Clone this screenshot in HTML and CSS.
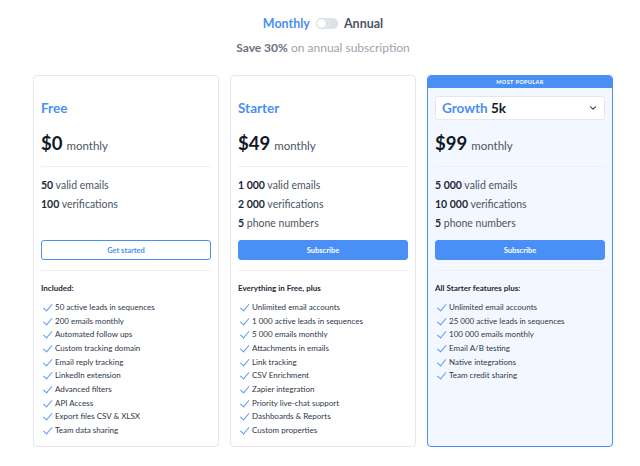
FILE: index.html
```html
<!DOCTYPE html>
<html lang="en">
  <head>
    <meta charset="UTF-8" />
    <meta name="viewport" content="width=device-width, initial-scale=1.0" />
    <title>Pricing</title>
    <link rel="stylesheet" href="styles.css">
  </head>
  <body>
    <div class="pricing">
      <div class="billing">
        <div class="billing-toggle">
          <span class="period active">Monthly</span>
          <span class="switch"><span class="knob"></span></span>
          <span class="period">Annual</span>
        </div>
        <p class="saving"><strong>Save 30%</strong> on annual subscription</p>
      </div>

      <div class="plans">
        <div class="plan">
          <div class="plan-title">Free</div>
          <div class="price"><span class="amount">$0</span> monthly</div>
          <div class="stats">
            <div><b>50</b> valid emails</div>
            <div><b>100</b> verifications</div>
          </div>
          <button class="btn btn-outline">Get started</button>
          <div class="features">
            <h4>Included:</h4>
            <ul>
              <li>50 active leads in sequences</li>
              <li>200 emails monthly</li>
              <li>Automated follow ups</li>
              <li>Custom tracking domain</li>
              <li>Email reply tracking</li>
              <li>LinkedIn extension</li>
              <li>Advanced filters</li>
              <li>API Access</li>
              <li>Export files CSV &amp; XLSX</li>
              <li>Team data sharing</li>
            </ul>
          </div>
        </div>

        <div class="plan">
          <div class="plan-title">Starter</div>
          <div class="price"><span class="amount">$49</span> monthly</div>
          <div class="stats">
            <div><b>1 000</b> valid emails</div>
            <div><b>2 000</b> verifications</div>
            <div><b>5</b> phone numbers</div>
          </div>
          <button class="btn btn-primary">Subscribe</button>
          <div class="features">
            <h4>Everything in Free, plus</h4>
            <ul>
              <li>Unlimited email accounts</li>
              <li>1 000 active leads in sequences</li>
              <li>5 000 emails monthly</li>
              <li>Attachments in emails</li>
              <li>Link tracking</li>
              <li>CSV Enrichment</li>
              <li>Zapier integration</li>
              <li>Priority live-chat support</li>
              <li>Dashboards &amp; Reports</li>
              <li>Custom properties</li>
            </ul>
          </div>
        </div>

        <div class="plan popular">
          <div class="badge">MOST POPULAR</div>
          <div class="plan-select">
            <span><span class="plan-name">Growth</span> 5k</span>
            <svg width="10" height="10" viewBox="0 0 10 10"><path d="M2.5 3.8 5 6.2 7.5 3.8" fill="none" stroke="#374151" stroke-width="1.1" stroke-linecap="round" stroke-linejoin="round"/></svg>
          </div>
          <div class="price"><span class="amount">$99</span> monthly</div>
          <div class="stats">
            <div><b>5 000</b> valid emails</div>
            <div><b>10 000</b> verifications</div>
            <div><b>5</b> phone numbers</div>
          </div>
          <button class="btn btn-primary">Subscribe</button>
          <div class="features">
            <h4>All Starter features plus:</h4>
            <ul>
              <li>Unlimited email accounts</li>
              <li>25 000 active leads in sequences</li>
              <li>100 000 emails monthly</li>
              <li>Email A/B testing</li>
              <li>Native integrations</li>
              <li>Team credit sharing</li>
            </ul>
          </div>
        </div>
      </div>
    </div>
  </body>
</html>
```

FILE: styles.css
```css
* {
  margin: 0;
  padding: 0;
  box-sizing: border-box;
}

body {
  font-family: 'Lato', 'Open Sans', sans-serif;
  background: #fff;
  color: #1f2937;
}

.pricing {
  padding: 13px 27px 0 33px;
}

.billing {
  display: flex;
  flex-direction: column;
  align-items: center;
}

.billing-toggle {
  display: flex;
  align-items: center;
  gap: 5px;
  font-size: 12.5px;
  font-weight: 700;
  color: #4b5563;
  height: 20px;
}

.period.active {
  color: #4a8ff5;
}

.switch {
  width: 22px;
  height: 11px;
  border-radius: 6px;
  background: linear-gradient(90deg, #eceef1, #d9dce1);
  position: relative;
  margin: 0 1px;
}

.knob {
  position: absolute;
  left: 0;
  top: 0;
  width: 11px;
  height: 11px;
  border-radius: 50%;
  background: #fff;
  border: 1px solid #d1d5db;
}

.saving {
  margin-top: 6px;
  font-size: 12px;
  color: #9ca3af;
  line-height: 18px;
}

.saving strong {
  color: #6b7280;
  font-weight: 700;
}

.plans {
  margin-top: 18px;
  display: grid;
  grid-template-columns: repeat(3, 186px);
  gap: 11px;
}

.plan {
  border: 1px solid #e5e7eb;
  border-radius: 4px;
  padding: 20px 7px 10px;
  box-shadow: 0 1px 2px rgba(0, 0, 0, 0.04);
  height: 372px;
}

.plan-title {
  height: 24px;
  display: flex;
  align-items: center;
  font-size: 13.5px;
  font-weight: 700;
  color: #4a8ff5;
}

.price {
  margin-top: 9px;
  display: flex;
  align-items: baseline;
  gap: 4px;
  font-size: 11.5px;
  color: #4b5563;
  padding-bottom: 8px;
  border-bottom: 1px solid #eef0f3;
  height: 38px;
  line-height: 28px;
}

.amount {
  font-size: 18.5px;
  font-weight: 700;
  color: #111827;
}

.stats {
  padding-top: 9px;
  height: 73px;
  font-size: 10.5px;
  line-height: 19px;
  color: #4b5563;
}

.stats b {
  color: #1f2937;
  font-weight: 700;
}

.btn {
  display: block;
  width: 100%;
  height: 20px;
  border-radius: 3px;
  font-family: inherit;
  font-size: 7.5px;
  font-weight: 700;
  cursor: pointer;
}

.btn-outline {
  background: #fff;
  border: 1px solid #4a8ff5;
  color: #4a8ff5;
}

.btn-primary {
  background: #4a8ff5;
  border: 1px solid #4a8ff5;
  color: #fff;
}

.features {
  margin-top: 10px;
  border-top: 1px solid #eef0f3;
  padding-top: 11px;
}

.features h4 {
  font-size: 8px;
  font-weight: 700;
  color: #1f2937;
  line-height: 12px;
  margin-bottom: 7px;
}

.features ul {
  list-style: none;
}

.features li {
  position: relative;
  padding-left: 14px;
  font-size: 8px;
  line-height: 13.65px;
  color: #2d3748;
}

/* thin blue tick in front of every feature */
.features li::before {
  content: '';
  position: absolute;
  left: 2px;
  top: 3px;
  width: 8px;
  height: 3.5px;
  border-left: 1.2px solid #5b9bf5;
  border-bottom: 1.2px solid #5b9bf5;
  transform: rotate(-50deg);
  transform-origin: center;
}

.popular {
  border: 1.5px solid #4a8ff5;
  background: #f3f7ff;
  padding-top: 0;
  overflow: hidden;
}

.badge {
  margin: 0 -7px 8px;
  height: 12px;
  background: #4a8ff5;
  color: #fff;
  font-size: 5.5px;
  font-weight: 700;
  letter-spacing: 0.4px;
  text-align: center;
  line-height: 12px;
}

.plan-select {
  height: 24px;
  display: flex;
  align-items: center;
  justify-content: space-between;
  padding: 0 6px;
  background: #fff;
  border: 1px solid #e5e7eb;
  border-radius: 3px;
  font-size: 13.5px;
  font-weight: 700;
  color: #111827;
}

.plan-name {
  color: #4a8ff5;
}
```
